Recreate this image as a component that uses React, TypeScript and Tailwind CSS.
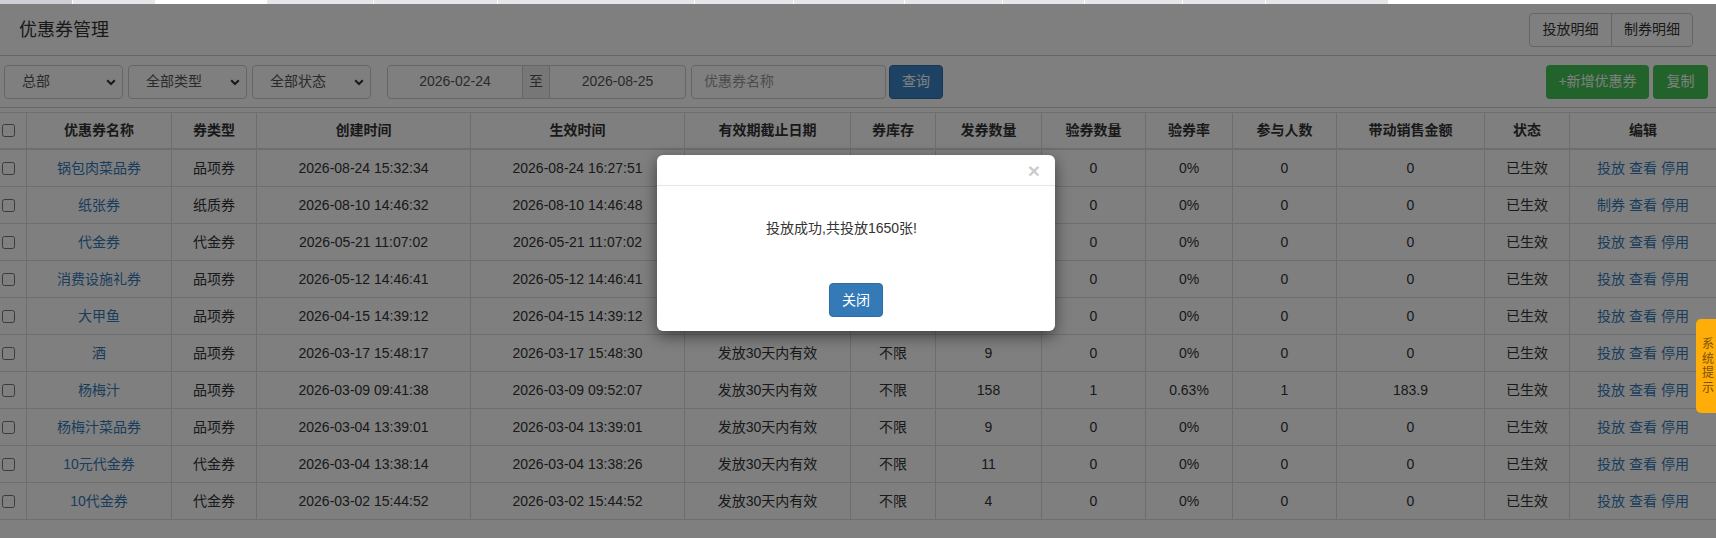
import React from "react";

const GRID =
  "grid grid-cols-[26px_145px_85px_214px_214px_166px_85px_106px_104px_87px_104px_148px_85px_147px]";

type Row = {
  name: string;
  type: string;
  created: string;
  effective: string;
  expire: string;
  stock: string;
  issued: string;
  checked: string;
  rate: string;
  people: string;
  sales: string;
  first: string;
};

const rows: Row[] = [
  { name: "锅包肉菜品券", type: "品项券", created: "2026-08-24 15:32:34", effective: "2026-08-24 16:27:51", expire: "发放30天内有效", stock: "不限", issued: "1650", checked: "0", rate: "0%", people: "0", sales: "0", first: "投放" },
  { name: "纸张券", type: "纸质券", created: "2026-08-10 14:46:32", effective: "2026-08-10 14:46:48", expire: "发放30天内有效", stock: "不限", issued: "0", checked: "0", rate: "0%", people: "0", sales: "0", first: "制券" },
  { name: "代金券", type: "代金券", created: "2026-05-21 11:07:02", effective: "2026-05-21 11:07:02", expire: "发放30天内有效", stock: "不限", issued: "0", checked: "0", rate: "0%", people: "0", sales: "0", first: "投放" },
  { name: "消费设施礼券", type: "品项券", created: "2026-05-12 14:46:41", effective: "2026-05-12 14:46:41", expire: "发放30天内有效", stock: "不限", issued: "0", checked: "0", rate: "0%", people: "0", sales: "0", first: "投放" },
  { name: "大甲鱼", type: "品项券", created: "2026-04-15 14:39:12", effective: "2026-04-15 14:39:12", expire: "发放30天内有效", stock: "不限", issued: "0", checked: "0", rate: "0%", people: "0", sales: "0", first: "投放" },
  { name: "酒", type: "品项券", created: "2026-03-17 15:48:17", effective: "2026-03-17 15:48:30", expire: "发放30天内有效", stock: "不限", issued: "9", checked: "0", rate: "0%", people: "0", sales: "0", first: "投放" },
  { name: "杨梅汁", type: "品项券", created: "2026-03-09 09:41:38", effective: "2026-03-09 09:52:07", expire: "发放30天内有效", stock: "不限", issued: "158", checked: "1", rate: "0.63%", people: "1", sales: "183.9", first: "投放" },
  { name: "杨梅汁菜品券", type: "品项券", created: "2026-03-04 13:39:01", effective: "2026-03-04 13:39:01", expire: "发放30天内有效", stock: "不限", issued: "9", checked: "0", rate: "0%", people: "0", sales: "0", first: "投放" },
  { name: "10元代金券", type: "代金券", created: "2026-03-04 13:38:14", effective: "2026-03-04 13:38:26", expire: "发放30天内有效", stock: "不限", issued: "11", checked: "0", rate: "0%", people: "0", sales: "0", first: "投放" },
  { name: "10代金券", type: "代金券", created: "2026-03-02 15:44:52", effective: "2026-03-02 15:44:52", expire: "发放30天内有效", stock: "不限", issued: "4", checked: "0", rate: "0%", people: "0", sales: "0", first: "投放" },
];

const headers = [
  "优惠券名称",
  "券类型",
  "创建时间",
  "生效时间",
  "有效期截止日期",
  "券库存",
  "发券数量",
  "验券数量",
  "验券率",
  "参与人数",
  "带动销售金额",
  "状态",
  "编辑",
];

function Sel({ label }: { label: string }) {
  return (
    <div className="relative w-[119px] h-[34px]">
      <select className="appearance-none w-full h-full border border-[#ccc] rounded-[4px] bg-white pl-[17px] text-[14px] text-[#555] outline-none">
        <option>{label}</option>
      </select>
      <svg
        className="absolute right-[7px] top-[14px] pointer-events-none"
        width="10"
        height="7"
        viewBox="0 0 10 7"
      >
        <path d="M1.2 1.2L5 5L8.8 1.2" stroke="#333" strokeWidth="2" fill="none" />
      </svg>
    </div>
  );
}

function Cell({ children, first }: { children?: React.ReactNode; first?: boolean }) {
  return (
    <div
      className={
        "flex items-center justify-center whitespace-nowrap " +
        (first ? "justify-start pl-[2px]" : "border-l border-[#ddd]")
      }
    >
      {children}
    </div>
  );
}

export default function App() {
  return (
    <div className="relative w-[1716px] h-[538px] overflow-hidden bg-white font-['Liberation_Sans','Noto_Sans_CJK_SC',sans-serif] text-[14px] text-[#333]">
      {/* parent tab strip */}
      <div className="flex h-[4px] bg-white">
        <div className="w-[72px] bg-[#cfd0d5]" />
        <div className="w-[83px] bg-[#e6e6ea] border-l border-white" />
        <div className="w-[112px] bg-white" />
        <div className="w-[106px] bg-[#e6e6ea]" />
        <div className="w-[124px] bg-[#e6e6ea] border-l border-white" />
        <div className="w-[197px] bg-[#e6e6ea] border-l border-white" />
        <div className="w-[99px] bg-[#e6e6ea] border-l border-white" />
        <div className="w-[111px] bg-[#e6e6ea] border-l border-white" />
        <div className="w-[98px] bg-[#e6e6ea] border-l border-white" />
        <div className="w-[82px] bg-[#e6e6ea] border-l border-white" />
        <div className="w-[98px] bg-[#e6e6ea] border-l border-white" />
        <div className="w-[83px] bg-[#e6e6ea] border-l border-white" />
        <div className="w-[123px] bg-[#e6e6ea] border-l border-white" />
        <div className="flex-1 bg-white" />
      </div>

      {/* page */}
      <div className="relative h-[534px]">
        {/* title bar */}
        <div className="flex h-[52px] items-center justify-between border-b border-[#ccc] pl-[19px] pr-[23px]">
          <div className="text-[18px] leading-[24px] text-[#333]">优惠券管理</div>
          <div className="flex h-[34px] rounded-[4px] border border-[#ccc] bg-white text-[14px] text-[#333]">
            <button className="w-[81px] h-full">投放明细</button>
            <button className="w-[81px] h-full border-l border-[#ccc]">制券明细</button>
          </div>
        </div>

        {/* filter bar */}
        <div className="flex h-[52px] items-center justify-between border-b border-[#ccc] pl-[4px] pr-[8px]">
          <div className="flex items-center">
            <div className="flex gap-[5px]">
              <Sel label="总部" />
              <Sel label="全部类型" />
              <Sel label="全部状态" />
            </div>
            <div className="ml-[16px] flex h-[34px] text-[#555]">
              <div className="w-[136px] flex items-center justify-center border border-[#ccc] rounded-l-[4px]">2026-02-24</div>
              <div className="w-[26px] flex items-center justify-center border-y border-[#ccc] bg-[#eee]">至</div>
              <div className="w-[137px] flex items-center justify-center border border-[#ccc] rounded-r-[4px]">2026-08-25</div>
            </div>
            <div className="ml-[5px] w-[195px] h-[34px] flex items-center border border-[#ccc] rounded-[4px] pl-[12px] text-[#999]">
              优惠券名称
            </div>
            <button className="ml-[3px] w-[54px] h-[34px] rounded-[4px] bg-[#3a85c8] border border-[#2e6da4] text-white">查询</button>
          </div>
          <div className="flex gap-[4px]">
            <button className="w-[103px] h-[34px] rounded-[4px] bg-[#44c656] text-white">+新增优惠券</button>
            <button className="w-[55px] h-[34px] rounded-[4px] bg-[#44c656] text-white">复制</button>
          </div>
        </div>

        {/* table */}
        <div className="mt-[4px]">
          <div className={GRID + " h-[38px] border-t border-b-2 border-[#ddd] font-bold"}>
            <Cell first>
              <input type="checkbox" className="w-[13px] h-[13px]" />
            </Cell>
            {headers.map((h) => (
              <Cell key={h}>{h}</Cell>
            ))}
          </div>
          {rows.map((r, i) => (
            <div key={i} className={GRID + " h-[37px] border-b border-[#ddd]"}>
              <Cell first>
                <input type="checkbox" className="w-[13px] h-[13px]" />
              </Cell>
              <Cell>
                <a className="text-[#337ab7]">{r.name}</a>
              </Cell>
              <Cell>{r.type}</Cell>
              <Cell>{r.created}</Cell>
              <Cell>{r.effective}</Cell>
              <Cell>{r.expire}</Cell>
              <Cell>{r.stock}</Cell>
              <Cell>{r.issued}</Cell>
              <Cell>{r.checked}</Cell>
              <Cell>{r.rate}</Cell>
              <Cell>{r.people}</Cell>
              <Cell>{r.sales}</Cell>
              <Cell>已生效</Cell>
              <Cell>
                <span className="text-[#337ab7]">
                  <a>{r.first}</a> <a>查看</a> <a>停用</a>
                </span>
              </Cell>
            </div>
          ))}
        </div>

        {/* modal backdrop */}
        <div className="absolute inset-0 bg-black/50" />

        {/* modal */}
        <div className="absolute left-[657px] top-[151px] w-[398px] rounded-[6px] bg-white shadow-[0_5px_15px_rgba(0,0,0,0.5)] flex flex-col">
          <div className="h-[31px] border-b border-[#e5e5e5] flex items-center justify-end pr-[15px]">
            <span className="text-[21px] font-bold leading-none text-black opacity-20">×</span>
          </div>
          <div className="h-[83px] pt-[32px] pr-[29px] text-center leading-[20px] text-[#333]">
            投放成功,共投放1650张!
          </div>
          <div className="flex justify-center pt-[14px] pb-[14px]">
            <button className="w-[54px] h-[34px] rounded-[4px] bg-[#337ab7] border border-[#2e6da4] text-white">关闭</button>
          </div>
        </div>

        {/* system tip tab */}
        <div className="absolute right-0 top-[315px] w-[20px] h-[94px] rounded-l-[5px] bg-[#ffad08] flex flex-col items-center justify-center pl-[4px] text-[12px] leading-[14.5px] text-[#7a5200]">
          <span>系</span>
          <span>统</span>
          <span>提</span>
          <span>示</span>
        </div>
      </div>
    </div>
  );
}
